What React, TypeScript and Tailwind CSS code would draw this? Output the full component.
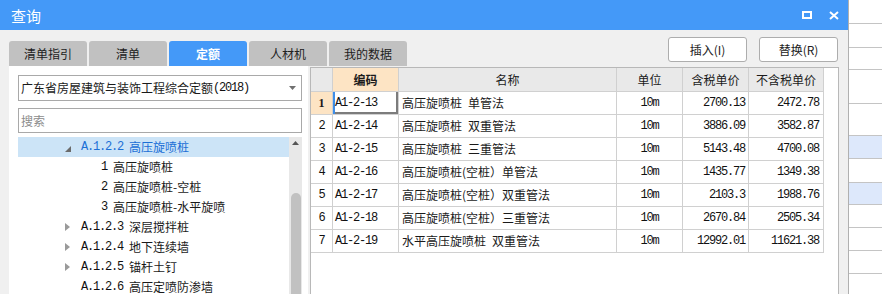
import React from "react";

const mono = "[font-family:'Liberation_Mono',monospace] text-[12px] tracking-[-1.2px] text-[#111]";

const tabs = ["清单指引", "清单", "定额", "人材机", "我的数据"];

type TreeRow = {
  level: 2 | 3;
  caret?: "down" | "right";
  code: string;
  name: string;
  selected?: boolean;
};

const treeRows: TreeRow[] = [
  { level: 2, caret: "down", code: "A.1.2.2", name: "高压旋喷桩", selected: true },
  { level: 3, code: "1", name: "高压旋喷桩" },
  { level: 3, code: "2", name: "高压旋喷桩-空桩" },
  { level: 3, code: "3", name: "高压旋喷桩-水平旋喷" },
  { level: 2, caret: "right", code: "A.1.2.3", name: "深层搅拌桩" },
  { level: 2, caret: "right", code: "A.1.2.4", name: "地下连续墙" },
  { level: 2, caret: "right", code: "A.1.2.5", name: "锚杆土钉" },
  { level: 2, code: "A.1.2.6", name: "高压定喷防渗墙" },
];

const rows = [
  ["A1-2-13", "高压旋喷桩\u2002单管法", "2700.13", "2472.78"],
  ["A1-2-14", "高压旋喷桩\u2002双重管法", "3886.09", "3582.87"],
  ["A1-2-15", "高压旋喷桩\u2002三重管法", "5143.48", "4700.08"],
  ["A1-2-16", "高压旋喷桩(空桩）单管法", "1435.77", "1349.38"],
  ["A1-2-17", "高压旋喷桩(空桩）双重管法", "2103.3", "1988.76"],
  ["A1-2-18", "高压旋喷桩(空桩）三重管法", "2670.84", "2505.34"],
  ["A1-2-19", "水平高压旋喷桩\u2002双重管法", "12992.01", "11621.38"],
];

// background window rows on the right: [height, highlighted]
const bgRows: [string, boolean][] = [
  ["h-[24px]", false],
  ["h-[24px]", false],
  ["h-[22px]", false],
  ["h-[34px]", false],
  ["h-[32px]", false],
  ["h-[23px]", true],
  ["h-[24px]", false],
  ["h-[22px]", true],
  ["h-[23px]", false],
  ["h-[23px]", false],
  ["h-[23px]", false],
  ["h-[21px]", false],
];

function Caret({ dir }: { dir: "down" | "right" }) {
  if (dir === "down") {
    return (
      <svg width="6" height="6" viewBox="0 0 6 6" className="mt-[3px]">
        <polygon points="6,0 6,6 0,6" fill="#6b6b6b" />
      </svg>
    );
  }
  return (
    <svg width="5" height="8" viewBox="0 0 5 8">
      <polygon points="0,0 5,4 0,8" fill="#9a9a9a" />
    </svg>
  );
}

export default function App() {
  return (
    <div className="w-[882px] h-[294px] flex overflow-hidden bg-white text-[#1a1a1a] [font-family:'Noto_Sans_CJK_SC',sans-serif]">
      {/* dialog */}
      <div className="w-[848px] h-full flex flex-col bg-[#f0f0f0]">
        {/* title bar */}
        <div className="h-[30px] shrink-0 bg-[#4499f8] flex items-center pl-[11px] pr-[9px]">
          <span className="text-white text-[15px] leading-none">查询</span>
          <div className="ml-auto flex items-center gap-[17px]">
            <svg width="10" height="8" viewBox="0 0 10 8">
              <rect x="1" y="1" width="8" height="6" fill="none" stroke="white" strokeWidth="2" />
            </svg>
            <svg width="10" height="9" viewBox="0 0 10 9">
              <path d="M1 1 L9 8 M9 1 L1 8" stroke="white" strokeWidth="2" />
            </svg>
          </div>
        </div>

        {/* tabs + buttons */}
        <div className="h-[36px] shrink-0 flex pl-[9px] pr-[10px]">
          <div className="mt-[11px] flex gap-[2px]">
            {tabs.map((t) => (
              <div
                key={t}
                className={
                  t === "定额"
                    ? "w-[78px] h-[25px] rounded-t-[3px] bg-[#4499f8] text-white font-bold text-[12px] flex items-center justify-center"
                    : "w-[78px] h-[25px] rounded-t-[3px] bg-[#c1c1c1] text-[#222] text-[12px] flex items-center justify-center"
                }
              >
                {t}
              </div>
            ))}
          </div>
          <div className="ml-auto mt-[7px] flex gap-[12px]">
            <button className="w-[79px] h-[25px] rounded-[3px] border border-[#adadad] bg-white text-[12px] text-[#222]">
              插入(I)
            </button>
            <button className="w-[79px] h-[25px] rounded-[3px] border border-[#adadad] bg-white text-[12px] text-[#222]">
              替换(R)
            </button>
          </div>
        </div>

        {/* panels */}
        <div className="flex-1 flex gap-[2px] pl-[9px] pr-[9px] min-h-0">
          {/* left tree panel */}
          <div className="w-[299px] bg-white flex flex-col pl-[9px] pr-[6px] pt-[9px] min-h-0">
            <div className="h-[26px] border border-[#a9a9a9] flex items-center pl-[2px] pr-[5px] text-[12px]">
              <span>广东省房屋建筑与装饰工程综合定额</span>
              <span className={mono}>(2018)</span>
              <svg width="7" height="4" viewBox="0 0 7 4" className="ml-auto">
                <polygon points="0,0 7,0 3.5,4" fill="#707070" />
              </svg>
            </div>
            <div className="mt-[7px] h-[25px] border border-[#a9a9a9] flex items-center pl-[2px] text-[12px] text-[#8c8c8c]">
              搜索
            </div>
            <div className="mt-[4px] flex flex-1 min-h-0">
              <div className="flex-1 flex flex-col">
                {treeRows.map((r) => (
                  <div
                    key={r.code + r.name}
                    className={
                      r.selected
                        ? "h-[20px] shrink-0 flex items-center bg-[#cce4f7] text-[#1b6fd6]"
                        : "h-[20px] shrink-0 flex items-center"
                    }
                  >
                    {r.level === 2 ? (
                      <div className="pl-[47px] w-[63px] shrink-0 flex items-center">
                        {r.caret && <Caret dir={r.caret} />}
                      </div>
                    ) : (
                      <div className="w-[83px] shrink-0" />
                    )}
                    <span
                      className={
                        mono + " whitespace-pre" + (r.selected ? " !text-[#1b6fd6]" : "")
                      }
                    >
                      {r.code + " "}
                    </span>
                    <span className="text-[12px]">{r.name}</span>
                  </div>
                ))}
              </div>
              {/* scrollbar */}
              <div className="w-[13px] bg-[#e8e8e8] flex flex-col items-center">
                <svg width="7" height="4" viewBox="0 0 7 4" className="mt-[4px]">
                  <polygon points="3.5,0 7,4 0,4" fill="#555" />
                </svg>
                <div className="mt-[48px] w-[10px] flex-1 rounded-t-[5px] bg-[#c1c1c1]" />
              </div>
            </div>
          </div>

          {/* grid */}
          <div className="flex-1 mt-[1px] bg-white border-l border-r border-t border-[#b8b8b8] flex flex-col text-[12px]">
            <div className="flex h-[24px] shrink-0">
              <div className="w-[22px] border-r border-b border-[#d0d0d0] bg-[#e9e9e9]" />
              <div className="w-[66px] border-r border-b border-[#d0d0d0] bg-[#fde4c4] font-bold flex items-center justify-center">
                编码
              </div>
              <div className="w-[218px] border-r border-b border-[#d0d0d0] bg-[#e9e9e9] flex items-center justify-center">
                名称
              </div>
              <div className="w-[66px] border-r border-b border-[#d0d0d0] bg-[#e9e9e9] flex items-center justify-center">
                单位
              </div>
              <div className="w-[66px] border-r border-b border-[#d0d0d0] bg-[#e9e9e9] flex items-center justify-center">
                含税单价
              </div>
              <div className="w-[75px] border-r border-b border-[#d0d0d0] bg-[#e9e9e9] flex items-center justify-center">
                不含税单价
              </div>
            </div>
            {rows.map((r, i) => (
              <div key={r[0]} className="flex h-[23px] shrink-0">
                <div
                  className={
                    i === 0
                      ? "w-[22px] border-r border-b border-[#d0d0d0] bg-[#fde4c4] flex items-center justify-center font-bold text-[12px] [font-family:'Liberation_Serif',serif]"
                      : "w-[22px] border-r border-b border-[#d0d0d0] flex items-center justify-center " + mono
                  }
                >
                  {i + 1}
                </div>
                <div
                  className={
                    i === 0
                      ? "w-[66px] border-r border-b border-[#d0d0d0] flex items-center pl-[2px] shadow-[inset_2px_0_0_#3d8ee9,inset_-2px_-2px_0_#7c7c7c] " + mono
                      : "w-[66px] border-r border-b border-[#d0d0d0] flex items-center pl-[2px] " + mono
                  }
                >
                  {r[0]}
                </div>
                <div className="w-[218px] border-r border-b border-[#d0d0d0] flex items-center pl-[3px]">
                  {r[1]}
                </div>
                <div className={"w-[66px] border-r border-b border-[#d0d0d0] flex items-center justify-center " + mono}>
                  10m
                </div>
                <div className={"w-[66px] border-r border-b border-[#d0d0d0] flex items-center justify-end pr-[3px] " + mono}>
                  {r[2]}
                </div>
                <div className={"w-[75px] border-r border-b border-[#d0d0d0] flex items-center justify-end pr-[4px] " + mono}>
                  {r[3]}
                </div>
              </div>
            ))}
          </div>
        </div>
      </div>

      {/* background window peeking on the right */}
      <div className="flex-1 border-l border-[#b0b0b0] bg-white flex flex-col">
        {bgRows.map(([h, hl], i) => (
          <div
            key={i}
            className={(hl ? "bg-[#dde8fb] " : "") + h + " shrink-0 border-b border-[#c4c4c4]"}
          />
        ))}
      </div>
    </div>
  );
}
